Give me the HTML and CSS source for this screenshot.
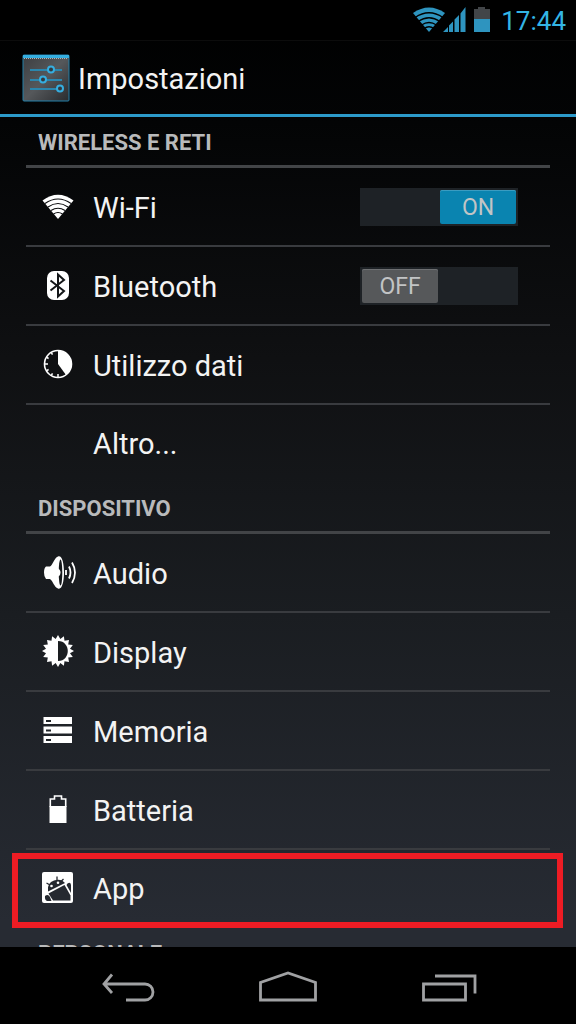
FILE: index.html
```html
<!DOCTYPE html>
<html lang="it">
<head>
<meta charset="utf-8">
<meta name="viewport" content="width=device-width, initial-scale=1">
<title>Impostazioni</title>
<link rel="stylesheet" href="styles.css">
</head>
<body>
<div class="screen">
  <div class="status">
    <svg class="status-signal" width="54" height="26" viewBox="0 0 54 26" aria-hidden="true">
      <path fill="#2e94bf" d="M0 6Q16-5 32 6L16 25Z"/>
      <path fill="none" stroke="#000" stroke-width="1.3" d="M2 10.500Q16 1 30 10.500M5 14.500Q16 7 27 14.500M8.500 18Q16 13 23.500 18M11 21.500Q16 18 21 21.500"/>
      <path fill="#2e94bf" d="M30 25L35 20V25ZM36 25V18.500L40 14.500V25ZM41.500 25V12.500L46 8V25ZM47.500 25V6.500L52.500 0V25Z"/>
    </svg>
    <svg class="status-battery" width="18" height="26" viewBox="0 0 18 26" aria-hidden="true">
      <path fill="#424548" d="M1 2H5V0H12V2H17V12H1Z"/>
      <path fill="#2e94bf" d="M1 12H17V25H1Z"/>
    </svg>
    <time class="clock">17:44</time>
  </div>

  <header class="header">
    <svg class="header-icon" width="48" height="48" viewBox="0 0 48 48" aria-hidden="true">
      <defs>
        <linearGradient id="tile" x1="0" y1="0" x2="1" y2="1">
          <stop offset="0" stop-color="#3c3e41"/><stop offset=".5" stop-color="#55585b"/><stop offset="1" stop-color="#292b2e"/>
        </linearGradient>
      </defs>
      <rect x="1" y="1" width="46" height="46" rx="1" fill="url(#tile)" stroke="#2481aa"/>
      <path fill="#35aee0" d="M1 1H47V4H1Z"/>
      <path stroke="#aeb4b7" stroke-dasharray="1 1" d="M2 4.500H46"/>
      <path stroke="#2b86ad" stroke-width="2" d="M8 16H40M8 26H40M8 35H40"/>
      <g fill="#34383b" stroke="#35aee0" stroke-width="2">
        <circle cx="29" cy="15.500" r="3"/><circle cx="21" cy="25.500" r="3"/><circle cx="38" cy="34.500" r="3"/>
      </g>
    </svg>
    <h1 class="title">Impostazioni</h1>
  </header>

  <main class="settings">
    <section>
      <h2 class="section-title">WIRELESS E RETI</h2>
      <ul class="list">
        <li class="row">
          <a class="row-link" href="#wifi">
            <svg class="icon" width="36" height="36" viewBox="0 0 36 36" aria-hidden="true">
              <path fill="#fff" d="M2.500 11.500Q18 0 33.500 11.500L18 30Z"/>
              <path fill="none" stroke="#0b0c0e" stroke-width="1.100" d="M5 14.500Q18 5.500 31 14.500M8 18Q18 11 28 18M11 21.500Q18 17 25 21.500M13.500 25Q18 22 22.500 25"/>
            </svg>
            <span class="label">Wi-Fi</span>
          </a>
          <button class="switch switch-on" type="button" role="switch" aria-checked="true" aria-label="Wi-Fi"><span class="thumb">ON</span></button>
        </li>
        <li class="row">
          <a class="row-link" href="#bluetooth">
            <svg class="icon" width="36" height="36" viewBox="0 0 36 36" aria-hidden="true">
              <rect x="7" y="3" width="22" height="29" rx="7" fill="#fff"/>
              <path fill="none" stroke="#141618" stroke-width="2" d="M10.500 12.500L24 23L18 28.500V6.500L24 12L10.500 22.500"/>
            </svg>
            <span class="label">Bluetooth</span>
          </a>
          <button class="switch" type="button" role="switch" aria-checked="false" aria-label="Bluetooth"><span class="thumb">OFF</span></button>
        </li>
        <li class="row">
          <a class="row-link" href="#dati">
            <svg class="icon" width="36" height="36" viewBox="0 0 36 36" aria-hidden="true">
              <circle cx="18" cy="17" r="13.500" fill="none" stroke="#fff" stroke-width="1.600"/>
              <path fill="#fff" d="M18 17V3.500A13.500 13.500 0 0 1 26 27.900Z"/>
              <path stroke="#fff" stroke-width="1.500" d="M4.500 17H8M18 27V31M11.200 5.300L12.500 7.600M6.300 10.200L8.600 11.500M6.300 23.800L8.600 22.500M11.200 28.700L12.500 26.400"/>
            </svg>
            <span class="label">Utilizzo dati</span>
          </a>
        </li>
        <li class="row">
          <a class="row-link" href="#altro"><span class="icon"></span><span class="label">Altro...</span></a>
        </li>
      </ul>
    </section>

    <section>
      <h2 class="section-title">DISPOSITIVO</h2>
      <ul class="list">
        <li class="row">
          <a class="row-link" href="#audio">
            <svg class="icon" width="36" height="36" viewBox="0 0 36 36" aria-hidden="true">
              <path fill="#fff" d="M6 11.500H10C13 10 14 3 18 1.500C22 0 24 8 24 17.500S22 35 18 33.500C14 32 13 26 10 24H6Q4 22 4 17.500T6 11.500Z"/>
              <ellipse cx="20.500" cy="17.500" rx="1.800" ry="13" fill="#15181b"/>
              <path fill="#fff" d="M17 13Q20.500 14 20.500 17.500T17 22Z"/>
              <path fill="none" stroke="#fff" stroke-width="1.800" d="M26 15V20M29 11.500Q32 17.500 29 23.500M32 7.500Q38 17.500 32 28"/>
            </svg>
            <span class="label">Audio</span>
          </a>
        </li>
        <li class="row">
          <a class="row-link" href="#display">
            <svg class="icon" width="36" height="36" viewBox="0 0 36 36" aria-hidden="true">
              <path fill="#fff" d="M18 1L20.300 5L23.900 2.200L24.500 6.800L29 6L28.200 10.500L32.800 11.100L30 14.700L34 17L30 19.300L32.800 22.900L28.200 23.500L29 28L24.500 27.200L23.900 31.800L20.300 29L18 33L15.700 29L12.100 31.800L11.500 27.200L7 28L7.800 23.500L3.200 22.900L6 19.300L2 17L6 14.700L3.200 11.100L7.800 10.500L7 6L11.500 6.800L12.100 2.200L15.700 5Z"/>
              <path fill="#1a1d20" d="M18 7C31 7 31 27 18 27Z"/>
            </svg>
            <span class="label">Display</span>
          </a>
        </li>
        <li class="row">
          <a class="row-link" href="#memoria">
            <svg class="icon" width="36" height="36" viewBox="0 0 36 36" aria-hidden="true">
              <path fill="#fff" d="M3.500 4H32V11H3.500ZM3.500 13.500H32V20.500H3.500ZM3.500 23H32V30H3.500Z"/>
              <path stroke="#202428" stroke-width="2" d="M6 8H11M6 17.500H11M6 27H11"/>
            </svg>
            <span class="label">Memoria</span>
          </a>
        </li>
        <li class="row">
          <a class="row-link" href="#batteria">
            <svg class="icon" width="36" height="36" viewBox="0 0 36 36" aria-hidden="true">
              <path fill="#fff" d="M9.500 14H26.500V31H9.500Z"/>
              <path fill="none" stroke="#fff" stroke-width="1.600" d="M10.300 15V7H14.500V4H21.500V7H25.700V15"/>
            </svg>
            <span class="label">Batteria</span>
          </a>
        </li>
        <li class="row row-marked">
          <a class="row-link" href="#app">
            <svg class="icon" width="36" height="36" viewBox="0 0 36 36" aria-hidden="true">
              <rect x="2" y="2" width="31" height="31" rx="2" fill="#fff"/>
              <path fill="#252930" d="M8 20.500Q7 13 14 10.500T25 13L8 21.500Z"/>
              <path fill="none" stroke="#252930" stroke-width="1.300" d="M6.500 13L10 15M17 6.500V10.500M23.500 9L21 11.500"/>
              <circle cx="11.500" cy="16" r="1.300" fill="#fff"/><circle cx="18" cy="12.700" r="1.300" fill="#fff"/>
              <path fill="#252930" d="M8.500 23.500L24.500 15L30.500 25.500V30.500H13Z"/>
              <path fill="#252930" d="M27.500 13.500Q30.500 11.500 31 15V23L26.500 15ZM5 26Q8 23.500 10 27L11.500 31H7Q4.500 30 5 26Z"/>
            </svg>
            <span class="label">App</span>
          </a>
        </li>
      </ul>
    </section>

    <section>
      <h2 class="section-title">PERSONALE</h2>
    </section>
  </main>

  <nav class="navbar" aria-label="Sistema">
    <button class="nav-button" type="button" aria-label="Indietro">
      <svg width="60" height="36" viewBox="0 0 60 36" fill="none" stroke="#a0a1a3" stroke-width="2.800" aria-hidden="true">
        <path d="M14 4.500L6 14L14 23M6 14H47A8 8 0 0 1 47 30H28"/>
      </svg>
    </button>
    <button class="nav-button" type="button" aria-label="Home">
      <svg width="60" height="36" viewBox="0 0 60 36" fill="none" stroke="#a0a1a3" stroke-width="2.800" aria-hidden="true">
        <path d="M2.500 30V12.500L30 3L57.500 12.500V30Z"/>
      </svg>
    </button>
    <button class="nav-button" type="button" aria-label="App recenti">
      <svg width="60" height="36" viewBox="0 0 60 36" fill="none" stroke="#a0a1a3" stroke-width="2.800" aria-hidden="true">
        <path d="M5.500 14H47.500V30H5.500ZM17 6H57V23.500"/>
      </svg>
    </button>
  </nav>
</div>
</body>
</html>
```
FILE: styles.css
```css
* {
  box-sizing: border-box;
}

body {
  margin: 0;
  background: #000;
  color: #f3f3f3;
  font-family: Roboto, "Noto Sans", sans-serif;
  font-size: 29px;
}

.screen {
  display: flex;
  flex-direction: column;
  height: 100vh;
  overflow: hidden;
  background: linear-gradient(#000 0%, #030405 12%, #0f1012 35%, #1a1d21 60%, #272b33 90%, #272b33 100%);
}

.status {
  display: flex;
  flex: none;
  align-items: center;
  justify-content: flex-end;
  height: 41px;
  padding-right: 10px;
  border-bottom: 1px solid #0c0c0c;
  background: #000;
}

.status-battery {
  margin: 0 10px 0 6px;
}

.clock {
  padding-top: 2px;
  color: #33b5e5;
  font-size: 26px;
  line-height: 38px;
}

.header {
  display: flex;
  flex: none;
  align-items: center;
  gap: 8px;
  height: 76px;
  padding: 0 22px;
  border-bottom: 3px solid #2c9aca;
}

.title {
  margin: 0;
  padding-top: 3px;
  font-size: 29px;
  font-weight: 400;
  line-height: 40px;
}

.settings {
  flex: 1;
  min-height: 0;
  overflow: hidden;
  padding: 0 26px;
}

.section-title {
  height: 51px;
  margin: 0;
  padding: 12px 12px 0;
  border-bottom: 3px solid #424447;
  color: #b9babb;
  font-size: 22px;
  font-weight: 700;
  line-height: 28px;
}

.list {
  margin: 0;
  padding: 0;
  list-style: none;
}

.row {
  position: relative;
  display: flex;
  align-items: center;
  height: 79px;
  padding-right: 32px;
  border-bottom: 2px solid #393b3f;
}

.row:last-child {
  height: 78px;
  border-bottom-color: transparent;
}

.row-link {
  display: flex;
  flex: 1;
  align-items: center;
  gap: 17px;
  height: 100%;
  padding-left: 14px;
  color: inherit;
  text-decoration: none;
}

.icon {
  flex: none;
  width: 36px;
}

.label {
  padding-top: 2px;
}

.row-marked::after {
  content: "";
  position: absolute;
  inset: 3px -13px -2px -14px;
  border: 6px solid #ee1c24;
  pointer-events: none;
}

.switch {
  display: flex;
  width: 158px;
  height: 38px;
  padding: 2px;
  border: 0;
  background: #1e2226;
  color: #c2c4c5;
  font: inherit;
  font-size: 23px;
}

.switch-on {
  justify-content: flex-end;
}

.thumb {
  width: 76px;
  border-radius: 2px;
  background: #56585a;
  box-shadow: inset 0 1px #6e7072;
  line-height: 36px;
  text-align: center;
}

.switch-on .thumb {
  background: #0a84b0;
  box-shadow: inset 0 1px #3a9cc1;
}

.navbar {
  display: flex;
  flex: none;
  align-items: center;
  justify-content: center;
  gap: 100px;
  height: 77px;
  padding-top: 4px;
  background: #000;
}

.nav-button {
  display: flex;
  padding: 0;
  border: 0;
  background: none;
}
```
